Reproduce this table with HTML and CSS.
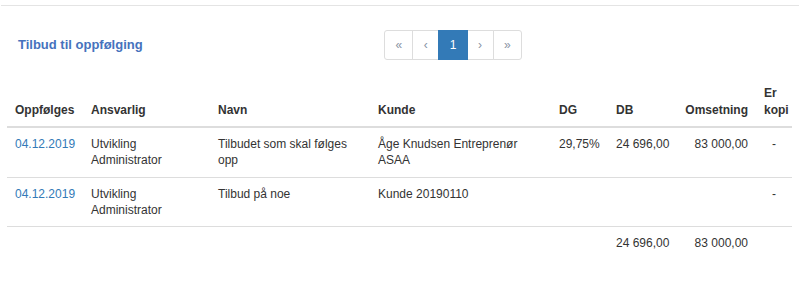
FILE: index.html
```html
<!DOCTYPE html>
<html lang="no">
<head>
<meta charset="utf-8">
<title>Tilbud til oppfølging</title>
<link rel="stylesheet" href="styles.css">
</head>
<body>
<div class="rule"></div>
<div class="wrap">
  <div class="toolbar">
    <div class="title">Tilbud til oppfølging</div>
    <ul class="pagination">
      <li class="disabled"><span>«</span></li>
      <li class="disabled"><span>‹</span></li>
      <li class="active"><span>1</span></li>
      <li class="disabled"><span>›</span></li>
      <li class="disabled"><span>»</span></li>
    </ul>
  </div>
  <table class="table">
    <colgroup>
      <col class="c-date"><col class="c-resp"><col class="c-name"><col class="c-cust">
      <col class="c-dg"><col class="c-db"><col class="c-sum"><col class="c-copy">
    </colgroup>
    <thead>
      <tr>
        <th>Oppfølges</th>
        <th>Ansvarlig</th>
        <th>Navn</th>
        <th>Kunde</th>
        <th>DG</th>
        <th>DB</th>
        <th class="num">Omsetning</th>
        <th>Er kopi</th>
      </tr>
    </thead>
    <tbody>
      <tr>
        <td><a href="#">04.12.2019</a></td>
        <td>Utvikling Administrator</td>
        <td>Tilbudet som skal følges opp</td>
        <td>Åge Knudsen Entreprenør ASAA</td>
        <td>29,75%</td>
        <td class="nowrap">24 696,00</td>
        <td class="num">83 000,00</td>
        <td class="center">-</td>
      </tr>
      <tr>
        <td><a href="#">04.12.2019</a></td>
        <td>Utvikling Administrator</td>
        <td>Tilbud på noe</td>
        <td>Kunde 20190110</td>
        <td></td>
        <td></td>
        <td class="num"></td>
        <td class="center">-</td>
      </tr>
    </tbody>
    <tfoot>
      <tr>
        <td></td><td></td><td></td><td></td><td></td>
        <td class="nowrap">24 696,00</td>
        <td class="num">83 000,00</td>
        <td></td>
      </tr>
    </tfoot>
  </table>
</div>
</body>
</html>
```

FILE: styles.css
```css
* { box-sizing: border-box; }
body {
  margin: 0;
  font-family: "Liberation Sans", Arial, Helvetica, sans-serif;
  font-size: 12px;
  line-height: 1.42857;
  color: #333;
  background: #fff;
}
.rule {
  margin: 5px 1px 0;
  border-top: 1px solid #e4e4e4;
}
.wrap { padding: 0 8px 0 7px; }
.toolbar {
  display: flex;
  align-items: center;
  padding: 24px 0 17px;
}
.title {
  width: 377px;
  padding-left: 11px;
  font-size: 13px;
  font-weight: bold;
  color: #4672bd;
}
.pagination {
  display: flex;
  list-style: none;
  margin: 0;
  padding: 0;
}
.pagination li span {
  display: block;
  padding: 5px 10.4px;
  font-size: 12px;
  line-height: 1.5;
  border: 1px solid #ddd;
  margin-left: -1px;
  background: #fff;
  color: #337ab7;
}
.pagination li:first-child span { margin-left: 0; border-radius: 3px 0 0 3px; }
.pagination li:last-child span { border-radius: 0 3px 3px 0; }
.pagination li.disabled span { color: #8893a4; }
.pagination li.active span {
  background: #337ab7;
  border-color: #337ab7;
  color: #fff;
  position: relative;
}
.table {
  width: 100%;
  border-collapse: collapse;
  border-spacing: 0;
  table-layout: fixed;
}
.c-date { width: 76px; }
.c-resp { width: 127px; }
.c-name { width: 160px; }
.c-cust { width: 181px; }
.c-dg { width: 57px; }
.c-db { width: 68px; }
.c-sum { width: 80px; }
.c-copy { width: 36px; }
.table th, .table td {
  padding: 8px;
  text-align: left;
  vertical-align: top;
}
.table th {
  vertical-align: bottom;
  font-weight: bold;
  line-height: 17px;
  padding-bottom: 7px;
  border-bottom: 2px solid #ddd;
}
.table td {
  line-height: 16.3px;
  border-top: 1px solid #ddd;
}
.table .num { text-align: right; white-space: nowrap; }
.table .nowrap { white-space: nowrap; }
.table .center { text-align: center; }
.table a { color: #337ab7; text-decoration: none; }
```
